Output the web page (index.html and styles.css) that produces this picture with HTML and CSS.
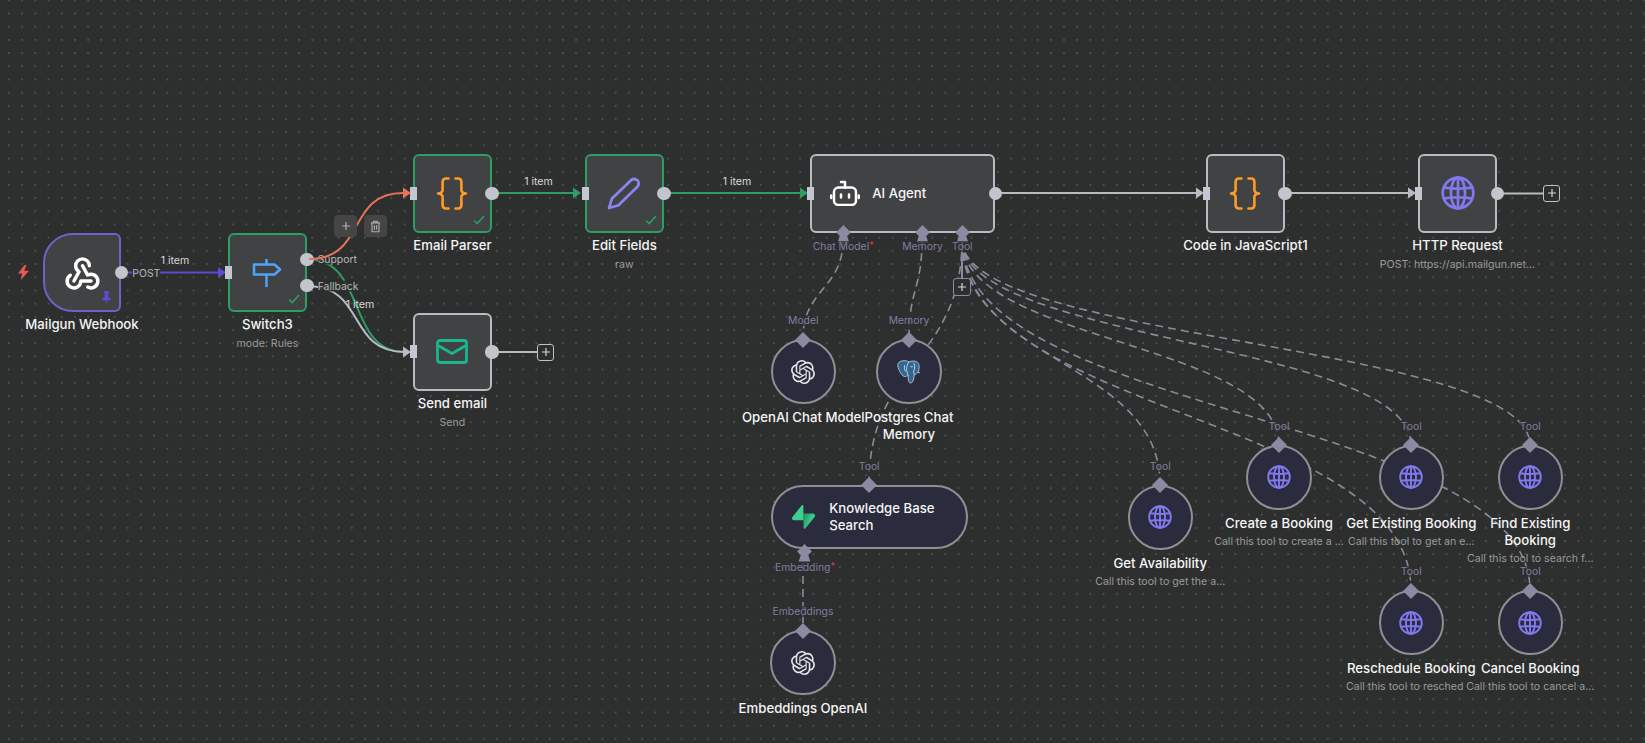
FILE: index.html
```html
<!DOCTYPE html>
<html lang="en">
<head>
<meta charset="utf-8">
<title>Workflow canvas</title>
<link rel="stylesheet" href="styles.css">
</head>
<body>
<svg class="defs" width="0" height="0" aria-hidden="true">
  <defs>
    <symbol id="globe" viewBox="0 0 24 24"><g fill="none" stroke="#8179ee" stroke-width="1.9" stroke-linecap="round"><circle cx="12" cy="12" r="10.8"/><ellipse cx="12" cy="12" rx="5" ry="10.8"/><path d="M2.6 8.2Q12 9.8 21.4 8.2M2.6 15.8Q12 14.2 21.4 15.8M12 1.2V22.8"/></g></symbol>
    <symbol id="braces" viewBox="0 0 32 33"><g fill="none" stroke="#ff9b26" stroke-width="2.6" stroke-linecap="round" stroke-linejoin="round"><path d="M12.5 1.5H10Q6.6 1.5 6.6 5V13Q6.6 16 2 16.5Q6.6 17 6.6 20V28Q6.6 31.5 10 31.5H12.5"/><path d="M19.5 1.5H22Q25.4 1.5 25.4 5V13Q25.4 16 30 16.5Q25.4 17 25.4 20V28Q25.4 31.5 22 31.5H19.5"/></g></symbol>
    <symbol id="check" viewBox="0 0 12 10"><path d="M1 5.5L4.2 8.6L11 1" fill="none" stroke="#2e9e62" stroke-width="1.6"/></symbol>
    <symbol id="openai" viewBox="0 0 24 24"><path fill="#e6e6ea" d="M22.2819 9.8211a5.9847 5.9847 0 0 0-.5157-4.9108 6.0462 6.0462 0 0 0-6.5098-2.9A6.0651 6.0651 0 0 0 4.9807 4.1818a5.9847 5.9847 0 0 0-3.9977 2.9 6.0462 6.0462 0 0 0 .7427 7.0966 5.98 5.98 0 0 0 .511 4.9107 6.051 6.051 0 0 0 6.5146 2.9001A5.9847 5.9847 0 0 0 13.2599 24a6.0557 6.0557 0 0 0 5.7718-4.2058 5.9894 5.9894 0 0 0 3.9977-2.9001 6.0557 6.0557 0 0 0-.7475-7.0729zm-9.022 12.6081a4.4755 4.4755 0 0 1-2.8764-1.0408l.1419-.0804 4.7783-2.7582a.7948.7948 0 0 0 .3927-.6813v-6.7369l2.02 1.1686a.071.071 0 0 1 .038.052v5.5826a4.504 4.504 0 0 1-4.4945 4.4944zm-9.6607-4.1254a4.4708 4.4708 0 0 1-.5346-3.0137l.142.0852 4.783 2.7582a.7712.7712 0 0 0 .7806 0l5.8428-3.3685v2.3324a.0804.0804 0 0 1-.0332.0615L9.74 19.9502a4.4992 4.4992 0 0 1-6.1408-1.6464zM2.3408 7.8956a4.485 4.485 0 0 1 2.3655-1.9728V11.6a.7664.7664 0 0 0 .3879.6765l5.8144 3.3543-2.0201 1.1685a.0757.0757 0 0 1-.071 0l-4.8303-2.7865A4.504 4.504 0 0 1 2.3408 7.872zm16.5963 3.8558L13.1038 8.364 15.1192 7.2a.0757.0757 0 0 1 .071 0l4.8303 2.7913a4.4944 4.4944 0 0 1-.6765 8.1042v-5.6772a.79.79 0 0 0-.407-.667zm2.0107-3.0231l-.142-.0852-4.7735-2.7818a.7759.7759 0 0 0-.7854 0L9.409 9.2297V6.8974a.0662.0662 0 0 1 .0284-.0615l4.8303-2.7866a4.4992 4.4992 0 0 1 6.6802 4.66zM8.3065 12.863l-2.02-1.1638a.0804.0804 0 0 1-.038-.0567V6.0742a4.4992 4.4992 0 0 1 7.3757-3.4537l-.142.0805L8.704 5.459a.7948.7948 0 0 0-.3927.6813zm1.0976-2.3654l2.602-1.4998 2.6069 1.4998v2.9994l-2.5974 1.4997-2.6067-1.4997Z"/></symbol>
    <symbol id="diamond" viewBox="0 0 14 14"><polygon points="7,0 14,7 7,14 0,7" fill="#8a8aa2"/></symbol>
    <symbol id="port" viewBox="0 0 14 17"><polygon points="7,0 14,7 10.5,10.5 12.5,16.5 1.5,16.5 3.5,10.5 0,7" fill="#8a8aa2"/></symbol>
    <symbol id="plus" viewBox="0 0 10 10"><path d="M5 1V9M1 5H9" fill="none" stroke="currentColor" stroke-width="1.2"/></symbol>
    <linearGradient id="supa" x1="53.9" y1="54.9" x2="94.1" y2="71.8" gradientUnits="userSpaceOnUse"><stop offset="0" stop-color="#249361"/><stop offset="1" stop-color="#3ecf8e"/></linearGradient>
  </defs>
</svg>

<main class="canvas">
  <svg class="edges" width="1645" height="743" viewBox="0 0 1645 743" aria-hidden="true">
    <g class="line purple"><path d="M123 272.5H220"/></g>
    <polygon class="fill-purple" points="218,267 226,272.5 218,278"/>
    <g class="line green">
      <path d="M307 259C367 259 346 352 405 352"/>
      <path d="M492 193H576"/>
      <path d="M664 193H803"/>
    </g>
    <polygon class="fill-green" points="573,187.5 581,193 573,198.5"/>
    <polygon class="fill-green" points="800,187.5 808,193 800,198.5"/>
    <g class="line pale">
      <path d="M307 286C367 286 346 352 405 352"/>
      <path d="M492 352H540"/>
      <path d="M994 193H1197"/>
      <path d="M1286 193H1408"/>
      <path d="M1497 193.500H1545"/>
      <path class="thin" d="M962 240V280"/>
    </g>
    <polygon class="fill-pale" points="403,346.500 411,352 403,357.500"/>
    <polygon class="fill-pale" points="1196,187.500 1204,193 1196,198.500"/>
    <polygon class="fill-pale" points="1408,187.500 1416,193 1408,198.500"/>
    <g class="line dash">
      <path d="M843 240C843 289 803 289 803 338"/>
      <path d="M922 240C922 289 909 289 909 338"/>
      <path d="M962 240C962 362 869 362 869 484"/>
      <path d="M962 240C962 362 1160 362 1160 484"/>
      <path d="M962 240C962 342 1279 342 1279 445"/>
      <path d="M962 240C962 342 1411 342 1411 445"/>
      <path d="M962 240C962 342 1530 342 1530 445"/>
      <path d="M962 240C962 415 1411 415 1411 590"/>
      <path d="M962 240C962 415 1530 415 1530 590"/>
      <path d="M803 550V630"/>
    </g>
  </svg>

  <span class="edge-label el-a">1 item</span>
  <span class="edge-label el-b">1 item</span>
  <span class="edge-label el-c">1 item</span>
  <span class="edge-label el-d">1 item</span>

  <!-- main nodes -->
  <section class="node n-mailgun">
    <div class="box trigger">
      <span class="out"></span>
      <span class="handle-label post">POST</span>
      <svg class="icon webhook" viewBox="0 0 24 24"><g fill="none" stroke="#fff" stroke-width="2" stroke-linecap="round" stroke-linejoin="round"><path d="M4.876 13.61a4 4 0 1 0 6.124 3.39h6"/><path d="M15.066 20.502a4 4 0 1 0 1.934 -7.502c-.706 0 -1.424 .179 -2 .5l-3 -5.5"/><path d="M16 8a4 4 0 1 0 -8 0c0 1.506 .77 2.818 2 3.5l-3 5.5"/></g></svg>
      <svg class="pin" viewBox="0 0 12 14"><path fill="#5a4bd0" d="M3 0H9V1.500L8 2.700V6L10.700 8.600V10H7L6 14L5 10H1.300V8.600L4 6V2.700L3 1.500Z"/></svg>
      <svg class="bolt" viewBox="0 0 11 15"><path fill="#ea5b4f" d="M6.500 0L0 8.500H4.200L2.800 15L11 5.800H6.200L8.500 0Z"/></svg>
    </div>
    <div class="name">Mailgun Webhook</div>
  </section>

  <section class="node n-switch">
    <div class="box ok">
      <span class="in"></span>
      <span class="out o-top"></span>
      <span class="out o-bottom"></span>
      <span class="handle-label support">Support</span>
      <span class="handle-label fallback">Fallback</span>
      <svg class="icon sign" viewBox="0 0 30 28"><g fill="none" stroke="#4ea5f7" stroke-width="2.500" stroke-linejoin="round"><path d="M14.500 0V5M14.500 16V28"/><path d="M2 5.500H22.500L28 10.500L22.500 15.500H2Z"/></g></svg>
      <svg class="check"><use href="#check"/></svg>
    </div>
    <div class="name">Switch3</div>
    <div class="sub">mode: Rules</div>
  </section>

  <section class="node n-email">
    <div class="box ok">
      <span class="in"></span>
      <span class="out"></span>
      <svg class="icon code"><use href="#braces"/></svg>
      <svg class="check"><use href="#check"/></svg>
    </div>
    <div class="name">Email Parser</div>
  </section>

  <section class="node n-send">
    <div class="box">
      <span class="in"></span>
      <span class="out"></span>
      <svg class="icon mail" viewBox="0 0 32 25"><g fill="none" stroke="#17b78f" stroke-width="2.800" stroke-linejoin="round"><rect x="1.500" y="1.500" width="29" height="22" rx="2.500"/><path d="M2 6.500L16 14.500L30 6.500"/></g></svg>
    </div>
    <div class="name">Send email</div>
    <div class="sub">Send</div>
  </section>

  <section class="node n-edit">
    <div class="box ok">
      <span class="in"></span>
      <span class="out"></span>
      <svg class="icon pencil" viewBox="0 0 34 33"><path d="M2 31L4.800 21.800L24 3.200Q27.300 .8 30.300 3.200Q33 6.300 30.600 9.500L11.500 28.300Z" fill="none" stroke="#8b85f2" stroke-width="2.700" stroke-linejoin="round"/></svg>
      <svg class="check"><use href="#check"/></svg>
    </div>
    <div class="name">Edit Fields</div>
    <div class="sub">raw</div>
  </section>

  <section class="node n-agent">
    <div class="box wide">
      <span class="in"></span>
      <span class="out"></span>
      <svg class="robot" viewBox="0 0 30 26"><g fill="none" stroke="#fff" stroke-width="2.500" stroke-linecap="round" stroke-linejoin="round"><rect x="4" y="7.500" width="22" height="17.500" rx="4.500"/><path d="M15 7.500V2H11M1.200 15.500V18M28.800 15.500V18M11 14.500V17.500M19 14.500V17.500"/></g></svg>
      <span class="wide-title">AI Agent</span>
      <svg class="port-mark pm-chat"><use href="#port"/></svg>
      <svg class="port-mark pm-memory"><use href="#port"/></svg>
      <svg class="port-mark pm-tool"><use href="#port"/></svg>
      <span class="port-label pl-chat">Chat Model<i class="req">*</i></span>
      <span class="port-label pl-memory">Memory</span>
      <span class="port-label pl-tool">Tool</span>
    </div>
  </section>

  <section class="node n-code">
    <div class="box">
      <span class="in"></span>
      <span class="out"></span>
      <svg class="icon code"><use href="#braces"/></svg>
    </div>
    <div class="name">Code in JavaScript1</div>
  </section>

  <section class="node n-http">
    <div class="box">
      <span class="in"></span>
      <span class="out"></span>
      <svg class="icon globe-lg"><use href="#globe"/></svg>
    </div>
    <div class="name">HTTP Request</div>
    <div class="sub">POST: https://api.mailgun.net...</div>
  </section>

  <!-- sub nodes -->
  <section class="node n-chat">
    <div class="circle">
      <span class="top-label">Model</span>
      <svg class="top-mark"><use href="#diamond"/></svg>
      <svg class="mini"><use href="#openai"/></svg>
    </div>
    <div class="name sub-name">OpenAI Chat Model</div>
  </section>

  <section class="node n-memory">
    <div class="circle">
      <span class="top-label">Memory</span>
      <svg class="top-mark"><use href="#diamond"/></svg>
      <svg class="elephant" viewBox="0 0 24 25">
        <path fill="#336791" stroke="#e8eef4" stroke-width=".7" d="M5 1C9 .2 11 1 12.500 2C15 .8 19 .4 21.500 2.500C23.800 4.500 23.500 9 22 12.500C21 14.500 19.500 15 18 15C17.800 18 17.500 21 16 23C14.500 24.800 12.500 24 12 21.500C11.700 19.500 11.800 17.500 11.600 16C9 18 6.500 17.500 4.500 14.500C2.500 11.500 .6 8 .8 5C1 2.800 2.800 1.400 5 1Z"/>
        <path fill="none" stroke="#e8eef4" stroke-width=".8" d="M12.500 2C11 4 9.800 7 10 10C10.100 12 11 14 11.600 16M8 5.500C7.500 8 7.500 10 9 12M17.500 3C19 5.500 18.500 9 17.500 11.500C17 13 17.800 14 18 15M14 7H16.500M22 12.500L24 13.500"/>
      </svg>
    </div>
    <div class="name sub-name">Postgres Chat Memory</div>
  </section>

  <section class="node n-kb">
    <div class="pill">
      <span class="top-label">Tool</span>
      <svg class="top-mark"><use href="#diamond"/></svg>
      <svg class="supabase" viewBox="0 0 109 113"><path fill="url(#supa)" d="M63.7076 110.284C60.8481 113.885 55.0502 111.912 54.9813 107.314L53.9738 40.0625L99.1935 40.0625C107.384 40.0625 111.952 49.5226 106.859 55.9372L63.7076 110.284Z"/><path fill="#3ecf8e" d="M45.317 2.07103C48.1765 -1.53037 53.9745 .442937 54.0434 5.041L54.4849 72.2922H9.83113C1.64038 72.2922 -2.92775 62.8321 2.1655 56.4175L45.317 2.07103Z"/></svg>
      <span class="pill-title">Knowledge Base Search</span>
      <svg class="port-mark pm-embed"><use href="#port"/></svg>
      <span class="port-label pl-embed">Embedding<i class="req">*</i></span>
    </div>
  </section>

  <section class="node n-embed">
    <div class="circle">
      <span class="top-label">Embeddings</span>
      <svg class="top-mark"><use href="#diamond"/></svg>
      <svg class="mini"><use href="#openai"/></svg>
    </div>
    <div class="name sub-name">Embeddings OpenAI</div>
  </section>

  <section class="node n-avail">
    <div class="circle">
      <span class="top-label">Tool</span>
      <svg class="top-mark"><use href="#diamond"/></svg>
      <svg class="mini"><use href="#globe"/></svg>
    </div>
    <div class="name sub-name">Get Availability</div>
    <div class="sub tight">Call this tool to get the a...</div>
  </section>

  <section class="node n-create">
    <div class="circle">
      <span class="top-label">Tool</span>
      <svg class="top-mark"><use href="#diamond"/></svg>
      <svg class="mini"><use href="#globe"/></svg>
    </div>
    <div class="name sub-name">Create a Booking</div>
    <div class="sub tight">Call this tool to create a ...</div>
  </section>

  <section class="node n-getex">
    <div class="circle">
      <span class="top-label">Tool</span>
      <svg class="top-mark"><use href="#diamond"/></svg>
      <svg class="mini"><use href="#globe"/></svg>
    </div>
    <div class="name sub-name">Get Existing Booking</div>
    <div class="sub tight">Call this tool to get an e...</div>
  </section>

  <section class="node n-find">
    <div class="circle">
      <span class="top-label">Tool</span>
      <svg class="top-mark"><use href="#diamond"/></svg>
      <svg class="mini"><use href="#globe"/></svg>
    </div>
    <div class="name sub-name">Find Existing Booking</div>
    <div class="sub tight">Call this tool to search f...</div>
  </section>

  <section class="node n-resched">
    <div class="circle">
      <span class="top-label">Tool</span>
      <svg class="top-mark"><use href="#diamond"/></svg>
      <svg class="mini"><use href="#globe"/></svg>
    </div>
    <div class="name sub-name">Reschedule Booking</div>
    <div class="sub tight cut">Call this tool to resched</div>
  </section>

  <section class="node n-cancel">
    <div class="circle">
      <span class="top-label">Tool</span>
      <svg class="top-mark"><use href="#diamond"/></svg>
      <svg class="mini"><use href="#globe"/></svg>
    </div>
    <div class="name sub-name">Cancel Booking</div>
    <div class="sub tight">Call this tool to cancel a...</div>
  </section>

  <!-- add handles -->
  <button class="add add-send"><svg class="plus-mark"><use href="#plus"/></svg></button>
  <button class="add add-http"><svg class="plus-mark"><use href="#plus"/></svg></button>
  <button class="add add-tool"><svg class="plus-mark"><use href="#plus"/></svg></button>

  <!-- selected edge with toolbar sits on top -->
  <svg class="edges" width="1645" height="743" viewBox="0 0 1645 743" aria-hidden="true">
    <path class="line orange" d="M309 259C367 259 346 193 403 193"/>
    <polygon class="fill-orange" points="403,187.500 411,193 403,198.500"/>
  </svg>
  <div class="edge-tools">
    <button class="tool-btn"><svg class="tool-plus"><use href="#plus"/></svg></button>
    <button class="tool-btn"><svg class="trash" viewBox="0 0 12 14"><g fill="none" stroke="#b0b0b0" stroke-width="1.200"><path d="M1 3H11M4 3V1.200H8V3M2.200 3V12.800H9.800V3M4.800 5.500V10.500M7.200 5.500V10.500"/></g></svg></button>
  </div>
</main>
</body>
</html>
```

FILE: styles.css
```css
* { box-sizing: border-box; }
html, body { margin: 0; padding: 0; }
body { background: #2d2e2e; font-family: Inter, "Noto Sans", sans-serif; }
.defs { position: absolute; }

.canvas {
  position: relative;
  width: 1645px;
  height: 743px;
  overflow: hidden;
  background-color: #2d2e2e;
  background-image: radial-gradient(circle at center, #7d7e7e 0, #7d7e7e .45px, transparent .8px);
  background-size: 13.2px 13.2px;
  background-position: 2.4px -6.3px;
}

/* edges */
.edges { position: absolute; left: 0; top: 0; pointer-events: none; }
.line path, path.line { fill: none; stroke-width: 2; }
.purple path { stroke: #5a4bd0; }
.green path { stroke: #2e9e62; }
.pale path { stroke: #b9bbc2; }
.pale path.thin { stroke: #8a8aa2; }
.dash path { stroke: #8a8a9c; stroke-width: 1.600; stroke-dasharray: 8 5; }
path.orange { stroke: #e8735a; }
.fill-purple { fill: #5a4bd0; }
.fill-green { fill: #2e9e62; }
.fill-pale { fill: #b9bbc2; }
.fill-orange { fill: #e8735a; }

.edge-label {
  position: absolute;
  transform: translate(-50%, -50%);
  font-size: 10.600px;
  line-height: 12px;
  color: #d9d9d9;
}
.el-a { left: 175px; top: 261px; }
.el-b { left: 538.500px; top: 182px; }
.el-c { left: 737px; top: 182px; }
.el-d { left: 360px; top: 305px; }

/* nodes */
.node {
  position: absolute;
  width: 200px;
  display: flex;
  flex-direction: column;
  align-items: center;
}
.n-mailgun { left: -18px; top: 233.400px; }
.n-switch { left: 167.400px; top: 233.400px; }
.n-email { left: 352.400px; top: 154px; }
.n-send { left: 352.400px; top: 312.600px; }
.n-edit { left: 524.400px; top: 154px; }
.n-agent { left: 802.500px; top: 154px; }
.n-code { left: 1145.400px; top: 154px; }
.n-http { left: 1357.500px; top: 154px; }
.n-chat { left: 703.300px; top: 339px; }
.n-memory { left: 809px; top: 339px; }
.n-kb { left: 769.200px; top: 484.700px; }
.n-embed { left: 703px; top: 630px; }
.n-avail { left: 1060.300px; top: 484.600px; }
.n-create { left: 1179px; top: 444.600px; }
.n-getex { left: 1311.300px; top: 444.600px; }
.n-find { left: 1430.300px; top: 444.600px; }
.n-resched { left: 1311.300px; top: 590px; }
.n-cancel { left: 1430.300px; top: 590px; }

.box {
  position: relative;
  width: 78.600px;
  height: 78.600px;
  display: flex;
  align-items: center;
  justify-content: center;
  background: #414244;
  border: 2px solid #b9bbc2;
  border-radius: 6px;
}
.box.ok { border-color: #2e9e62; }
.box.trigger {
  border-color: #7060c8;
  border-radius: 30px 6px 6px 30px;
}
.box.wide {
  width: 184.600px;
  justify-content: flex-start;
  padding-left: 18px;
}

.in {
  position: absolute;
  left: -5.500px;
  top: 50%;
  width: 7px;
  height: 13px;
  margin-top: -6.500px;
  background: #c4c7d2;
}
.out {
  position: absolute;
  right: -9.200px;
  top: 50%;
  width: 13.400px;
  height: 13.400px;
  margin-top: -6.700px;
  border-radius: 50%;
  background: #c2c5cc;
}
.out.o-top { top: 25.800px; margin-top: -8.700px; }
.out.o-bottom { top: 52.300px; margin-top: -8.700px; }

.handle-label {
  position: absolute;
  transform: translateY(-50%);
  font-size: 10.400px;
  line-height: 11px;
  color: #b8b8b8;
  background: rgba(45, 46, 46, .85);
  white-space: nowrap;
}
.post { left: calc(100% + 13px); top: 50%; }
.support { left: calc(100% + 13px); top: 23.800px; }
.fallback { left: calc(100% + 13px); top: 50.300px; }

.icon { flex: none; }
.webhook { width: 41px; height: 41px; }
.sign { width: 30px; height: 28px; }
.code { width: 32px; height: 33px; }
.mail { width: 32px; height: 25px; }
.pencil { width: 34px; height: 33px; }
.globe-lg { width: 34px; height: 34px; }
.check { position: absolute; right: 5px; bottom: 6px; width: 12px; height: 10px; }
.pin { position: absolute; right: 7px; bottom: 6px; width: 11px; height: 13px; }
.bolt { position: absolute; left: -27px; top: 30px; width: 11px; height: 15px; }

.robot { width: 30px; height: 26px; flex: none; margin-right: 12px; }
.wide-title { font-size: 13.200px; font-weight: 500; color: #f5f5f5; margin-left: 0; }

.port-mark { position: absolute; width: 15px; height: 18px; }
.pm-chat { left: 23.500px; top: 68.500px; }
.pm-memory { left: 102.800px; top: 68.500px; }
.pm-tool { left: 142.500px; top: 68.500px; }
.pm-embed { left: 24.800px; top: 57px; }

.port-label {
  position: absolute;
  transform: translateX(-50%);
  font-size: 10.400px;
  line-height: 11px;
  color: #7f7fa2;
  white-space: nowrap;
  background: rgba(45, 46, 46, .7);
}
.pl-chat { left: 31px; top: 85px; }
.pl-memory { left: 110.300px; top: 85px; }
.pl-tool { left: 150px; top: 85px; }
.pl-embed { left: 32.300px; top: 75px; }
.req { font-style: normal; color: #f4354a; font-size: 9px; vertical-align: 2px; line-height: 0; }

/* labels */
.name {
  margin-top: 4px;
  font-size: 13.200px;
  font-weight: 500;
  line-height: 17px;
  color: #f5f5f5;
  text-align: center;
  max-width: 134px;
}
.n-mailgun .name, .n-code .name { white-space: nowrap; }
.sub {
  margin-top: 4px;
  font-size: 10.600px;
  line-height: 13px;
  color: #999a9c;
  white-space: nowrap;
  text-align: center;
}
.sub-name { margin-top: 5px; }
.sub.tight { margin-top: 3px; }
.cut { align-self: flex-start; margin-left: 34.700px; }

/* sub nodes */
.circle, .pill {
  position: relative;
  display: flex;
  align-items: center;
  background: #2a2b3c;
  border: 2px solid #8f8f94;
}
.circle {
  width: 65.400px;
  height: 65.400px;
  justify-content: center;
  border-radius: 50%;
}
.pill {
  width: 197px;
  height: 64.800px;
  border-radius: 33px;
  padding-left: 19.500px;
}
.top-mark {
  position: absolute;
  left: 50%;
  top: -9.500px;
  width: 16px;
  height: 16px;
  margin-left: -8px;
}
.top-label {
  position: absolute;
  left: 50%;
  top: -26px;
  transform: translateX(-50%);
  font-size: 10.400px;
  line-height: 11px;
  color: #7f7fa2;
  white-space: nowrap;
  background: rgba(45, 46, 46, .7);
}
.mini { width: 24px; height: 24px; }
.elephant { width: 23px; height: 24px; }
.supabase { width: 23px; height: 24px; flex: none; margin-right: 14px; }
.pill-title {
  font-size: 13.200px;
  font-weight: 500;
  line-height: 17px;
  color: #f5f5f5;
  width: 115px;
}

/* add handles */
.add {
  position: absolute;
  width: 17.400px;
  height: 17.400px;
  padding: 0;
  display: flex;
  align-items: center;
  justify-content: center;
  background: #2d2e2e;
  border: 1.600px solid #bfc1c8;
  border-radius: 3px;
  color: #d5d5d5;
}
.add-send { left: 537px; top: 343.500px; }
.add-http { left: 1543px; top: 184.500px; }
.add-tool { left: 953.300px; top: 278.300px; border-color: #8a8aa2; }
.plus-mark { width: 10px; height: 10px; }

/* edge toolbar */
.edge-tools {
  position: absolute;
  left: 334px;
  top: 215.400px;
  display: flex;
  gap: 7px;
}
.tool-btn {
  width: 23px;
  height: 21.600px;
  padding: 0;
  display: flex;
  align-items: center;
  justify-content: center;
  background: #454545;
  border: 0;
  border-radius: 4px;
  color: #b0b0b0;
}
.tool-plus { width: 10px; height: 10px; }
.trash { width: 11px; height: 13px; }
```
